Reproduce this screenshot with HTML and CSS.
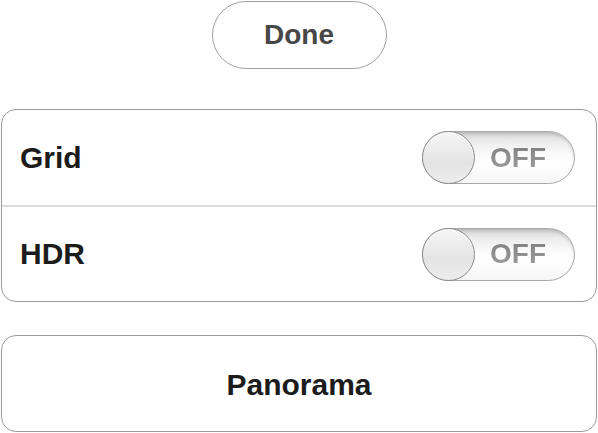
FILE: index.html
```html
<!DOCTYPE html>
<html>
<head>
<meta charset="utf-8">
<link rel="stylesheet" href="styles.css">
</head>
<body>
<div class="page">
  <div class="top">
    <button class="done">Done</button>
  </div>
  <div class="group">
    <div class="row">
      <span class="label">Grid</span>
      <div class="switch"><span class="knob"></span><span class="state">OFF</span></div>
    </div>
    <div class="row">
      <span class="label">HDR</span>
      <div class="switch"><span class="knob"></span><span class="state">OFF</span></div>
    </div>
  </div>
  <button class="pano">Panorama</button>
</div>
</body>
</html>
```
FILE: styles.css
```css
html, body {
  margin: 0;
  padding: 0;
  background: #fff;
}
body {
  font-family: "Liberation Sans", Arial, sans-serif;
  width: 598px;
  height: 433px;
  overflow: hidden;
}
.page {
  padding: 1px 1px 0 1px;
  display: flex;
  flex-direction: column;
}
.top {
  display: flex;
  justify-content: center;
}
.done {
  width: 175px;
  height: 68px;
  border: 1px solid #a0a0a0;
  border-radius: 34px;
  background: #fff;
  font-family: inherit;
  font-weight: bold;
  font-size: 28px;
  color: #474747;
  padding: 0;
}
.group {
  margin-top: 40px;
  border: 1px solid #9a9a9a;
  border-radius: 15px;
  display: flex;
  flex-direction: column;
}
.row {
  height: 95px;
  display: flex;
  align-items: center;
  justify-content: space-between;
  padding: 0 21px 0 18px;
}
.row + .row {
  border-top: 2px solid #dcdcdc;
  height: 94px;
}
.label {
  font-weight: bold;
  font-size: 30px;
  color: #1c1c1c;
}
.switch {
  position: relative;
  width: 151px;
  height: 51px;
  border: 1px solid #a8a8a8;
  border-radius: 27px;
  background: linear-gradient(#d2d2d2 0%, #ececec 18%, #fbfbfb 45%, #ffffff 60%, #f6f6f6 100%);
  box-shadow: inset 0 2px 3px rgba(0,0,0,0.12);
  display: flex;
  align-items: center;
}
.knob {
  position: absolute;
  left: -1px;
  top: -1px;
  width: 51px;
  height: 51px;
  border-radius: 50%;
  border: 1px solid #8c8c8c;
  background: linear-gradient(#f6f6f6, #e4e4e4 60%, #ededed);
  box-shadow: inset 0 1px 1px #fff;
}
.state {
  margin-left: 67px;
  font-weight: bold;
  font-size: 28px;
  color: #8d8d8d;
  background: linear-gradient(#7c7c7c, #a2a2a2);
  -webkit-background-clip: text;
  background-clip: text;
  -webkit-text-fill-color: transparent;
}
.pano {
  margin-top: 33px;
  height: 97px;
  border: 1px solid #9a9a9a;
  border-radius: 15px;
  background: #fff;
  font-family: inherit;
  font-weight: bold;
  font-size: 30px;
  color: #1c1c1c;
  padding: 0;
  padding-top: 2px;
}
```
